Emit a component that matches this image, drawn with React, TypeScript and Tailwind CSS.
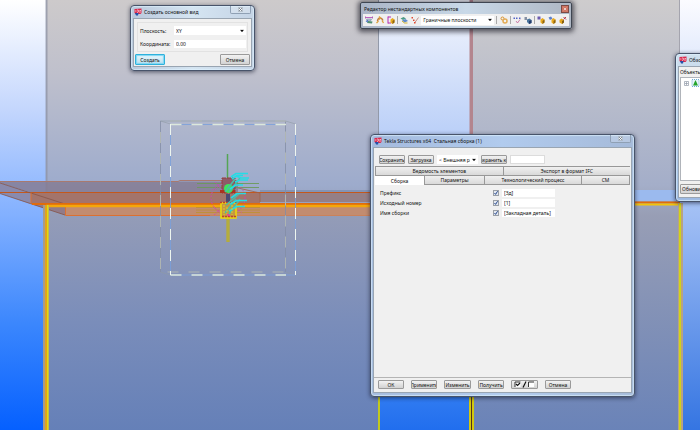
import React, { useState } from 'react';
import clsx from 'clsx';

const Logo: React.FC = () => (
  <svg viewBox="0 0 16 16" className="w-2 h-2 shrink-0" aria-hidden="true">
    <path d="M1 2 L15 1 L15 10 L13 12 L3 12 L1 10 Z" fill="#d92a4e" />
    <path d="M2 10 H9 L8 15 H4 Z" fill="#2450a8" />
    <path d="M2 6 H5 M6 4 Q9 3 9 6 T6 9 M11 5 H14 M10 8 H14" stroke="#ffd9e0" strokeWidth="1.5" fill="none" />
  </svg>
);

const CloseButton: React.FC<{ red?: boolean }> = ({ red }) => (
  <button
    type="button"
    aria-label="Закрыть"
    className={clsx(
      'flex items-center justify-center border',
      red
        ? 'w-2 h-2 border-[#7d4a44] bg-[#cf7563]'
        : 'w-[21px] h-2 self-start border-t-0 border-[#8fa0b4] rounded-b-[2px] bg-white/20'
    )}
  >
    <svg viewBox="0 0 10 10" className={red ? 'w-1 h-1' : 'w-[5px] h-[5px]'}>
      {!red && <path d="M0.8 1 H9.2 V9 H0.8 Z" fill="#f4f7fa" stroke="#8b96a2" />}
      <path d="M2 2 L8 8 M8 2 L2 8" stroke={red ? '#fff' : '#68727e'} strokeWidth="1.6" />
    </svg>
  </button>
);

interface WindowProps {
  title: string;
  className: string;
  children: React.ReactNode;
}

const Window: React.FC<WindowProps> = ({ title, className, children }) => (
  <section
    className={clsx(
      'absolute flex flex-col rounded-[4px] border border-[#48546a] px-[2px] pb-[3px] shadow-[0_1px_4px_rgba(20,25,45,0.65),inset_0_0_1px_1px_rgba(225,242,255,0.65)]',
      className
    )}
  >
    <header className="flex h-3 shrink-0 items-center gap-[2px] pl-px pr-px">
      <Logo />
      <h2 className="flex-1 whitespace-pre text-[5px] leading-[8px]">{title}</h2>
      <CloseButton />
    </header>
    {children}
  </section>
);

const Button: React.FC<{ className?: string; primary?: boolean; children: React.ReactNode }> = ({
  className,
  primary,
  children,
}) => (
  <button
    type="button"
    className={clsx(
      'flex shrink-0 items-center justify-center overflow-hidden whitespace-nowrap rounded-[1px] border bg-gradient-to-b text-[5px] leading-[8px]',
      primary
        ? 'border-[#2fb1dc] from-[#eaf7fc] to-[#b8dff0] shadow-[inset_0_0_1px_1px_#7fd6f2]'
        : 'border-[#9a9a9a] from-[#f2f2f2] to-[#d2d2d2]',
      className
    )}
  >
    {children}
  </button>
);

const Select: React.FC<{ label: string; options: string[]; className?: string }> = ({
  label,
  options,
  className,
}) => (
  <div className={clsx('relative bg-white', className)}>
    <select
      aria-label={label}
      className="block h-full w-full appearance-none bg-transparent pl-[2px] pr-2 text-[5px] leading-[8px] outline-none"
    >
      {options.map((option) => (
        <option key={option}>{option}</option>
      ))}
    </select>
    <svg viewBox="0 0 8 5" className="pointer-events-none absolute right-[2px] top-1/2 h-[3px] w-1 -translate-y-1/2">
      <path d="M0 0 H8 L4 5 Z" fill="#111" />
    </svg>
  </div>
);

const Scene: React.FC = () => (
  <svg
    viewBox="0 0 700 430"
    preserveAspectRatio="xMidYMid slice"
    className="absolute inset-0 h-full w-full"
    aria-hidden="true"
  >
    <defs>
      <linearGradient id="sky" x1="0" y1="0" x2="0" y2="1">
        <stop offset="0" stopColor="#ffffff" />
        <stop offset="0.25" stopColor="#c5d7fd" />
        <stop offset="0.5" stopColor="#82b0ff" />
        <stop offset="0.75" stopColor="#3c87fd" />
        <stop offset="1" stopColor="#0560ff" />
      </linearGradient>
      <linearGradient id="wall" x1="0" y1="0" x2="0" y2="1">
        <stop offset="0" stopColor="#cdcacb" />
        <stop offset="0.17" stopColor="#bfc0cc" />
        <stop offset="0.43" stopColor="#9dabcc" />
        <stop offset="0.5" stopColor="#949cb7" />
        <stop offset="0.75" stopColor="#7a8dba" />
        <stop offset="1" stopColor="#6580b8" />
      </linearGradient>
      <linearGradient id="rightWall" x1="0" y1="0" x2="0" y2="1">
        <stop offset="0" stopColor="#cecccd" />
        <stop offset="0.43" stopColor="#a4aec9" />
        <stop offset="0.5" stopColor="#989eb5" />
        <stop offset="1" stopColor="#6a83b8" />
      </linearGradient>
      <linearGradient id="gap" x1="0" y1="0" x2="0" y2="1">
        <stop offset="0" stopColor="#f4f6fd" />
        <stop offset="0.31" stopColor="#bbd0f8" />
        <stop offset="0.9" stopColor="#357ff2" />
        <stop offset="1" stopColor="#216eee" />
      </linearGradient>
      <linearGradient id="edge" x1="0" y1="0" x2="0" y2="1">
        <stop offset="0" stopColor="#fbfbff" />
        <stop offset="0.5" stopColor="#a0bef4" />
        <stop offset="1" stopColor="#3575e2" />
      </linearGradient>
    </defs>

    <rect width="700" height="430" fill="url(#sky)" />
    <rect x="46" width="333" height="430" fill="url(#wall)" />
    <rect x="379" width="91" height="430" fill="url(#gap)" />
    <rect x="472" width="208" height="430" fill="url(#rightWall)" />
    <rect x="680" width="20" height="430" fill="url(#edge)" />
    <rect x="45.500" width="2" height="192" fill="#8d93a5" opacity="0.75" />
    <rect x="378" width="1" height="200" fill="#9299a9" />
    <rect x="469.500" width="3.500" height="200" fill="#b3858e" />
    <rect x="679" width="1" height="200" fill="#a4a4ae" />

    {/* far edge of the slab, right of the beam */}
    <rect x="260" y="190" width="112" height="2" fill="#8494b5" />
    <rect x="635" y="190" width="45" height="11" fill="#9bbaee" />

    {/* beam */}
    <path d="M0 181.500 H238 V192.500 H31 L0 183 Z" fill="#857b93" opacity="0.85" />
    <path d="M0 183 L31 192.500 V204 L0 193.500 Z" fill="#8885a4" opacity="0.9" />
    <path d="M31 192.500 H260 V204 H31 Z" fill="#a3746b" />
    <path d="M260 192.500 H372 V202 H260 Z" fill="#957f86" />
    <path d="M31 204 H65 V215 Z" fill="#927b88" />
    <path d="M65 206 H372 V215 H65 Z" fill="#c28c70" />
    <path d="M0 181.500 H178 L180 180.500 H238" fill="none" stroke="#a9796e" />
    <path d="M0 192.500 H372" stroke="#c4581c" strokeWidth="1.200" />
    <path d="M0 183 L65 204 M0 193.500 L65 215" stroke="#875448" strokeWidth="0.800" />
    <path d="M31 192.500 V204 M65.500 204 V215.500 H210" fill="none" stroke="#dc7030" />
    <path d="M210 215.500 H372" stroke="#d97b42" strokeWidth="0.800" />
    <path d="M238 188 L260 193 V202" fill="none" stroke="#a06048" strokeWidth="0.800" />

    {/* slab outline */}
    <path d="M32 204 H372 M635 202.500 H680" stroke="#e16c0c" strokeWidth="2" />
    <path d="M46 206 H372" stroke="#f3a70b" strokeWidth="2.500" />
    <path d="M635 204.500 H680" stroke="#f3c40a" strokeWidth="2" />
    <rect x="43" y="205" width="6" height="225" fill="#a99c85" />
    <rect x="45" y="205" width="2" height="225" fill="#e2a21e" />
    <rect x="47" y="205" width="1.500" height="225" fill="#e1dc0a" />
    <rect x="378" y="396" width="2" height="34" fill="#c3c91c" />
    <rect x="469" y="396" width="5" height="34" fill="#d3c80f" />
    <rect x="471" y="396" width="1" height="34" fill="#50301f" />
    <rect x="678" y="203" width="5" height="227" fill="#b9a283" />
    <rect x="679" y="203" width="2" height="227" fill="#d0d31a" />

    {/* clip box of the component */}
    <g fill="none">
      <path d="M160.500 121 V272 M285.500 121 V272" stroke="#838da5" strokeWidth="0.800" />
      <path d="M160.500 121 H285.500 L295.500 124 M160.500 121 L170.500 124 M160.500 272 L170.500 275 M285.500 272 L295.500 275" stroke="#8f9aa4" strokeWidth="0.600" />
      <path d="M160.500 132 V272 H285.500 M170 121 H285.500 V272" stroke="#b3b9b3" strokeWidth="0.900" strokeDasharray="11 10" />
      <path d="M170.500 124.500 H285 M170.500 124.500 V275 M295.500 124.500 V275 M170.500 275 H295.500" stroke="#79a0dc" strokeWidth="0.800" />
      <path d="M170.500 124.500 H286 M170.500 275 H286" stroke="#dce8dc" strokeWidth="1.500" strokeDasharray="11 10" />
      <path d="M170.500 124 V275 M295.500 124 V275" stroke="#edf5ef" strokeDasharray="11 10" />
    </g>

    {/* anchors and bolts */}
    <g fill="none">
      <path d="M227.500 154 V180" stroke="#54a554" strokeWidth="1.500" />
      <path d="M197 183.500 H259 M197 187.500 H259" stroke="#6b9a59" strokeWidth="0.900" />
      <path d="M196 207.500 H260 M196 210 H260 M196 212.500 H260" stroke="#bd9137" strokeWidth="0.900" />
      <path d="M228 216 V242" stroke="#aaa562" strokeWidth="4" />
      <path d="M228 216 V242" stroke="#b4ad3d" strokeWidth="2" />
      <ellipse cx="228" cy="198" rx="17" ry="16" stroke="#d33fb8" strokeDasharray="1.500 2" />
      <path d="M215 182 L222 190 M215 190 L222 183 M214 207 L222 215 M214 215 L222 208 M236 207 L242 213" stroke="#d33fb8" strokeDasharray="1 1.300" />
      <rect x="222" y="178" width="13" height="15" fill="#8e5a68" stroke="#963b3b" strokeDasharray="4 1" />
      <rect x="220" y="190" width="15" height="3" fill="#aa3320" />
      <rect x="226" y="194" width="4" height="9" fill="#494a73" />
      <rect x="221" y="203" width="15" height="15" fill="#c69642" stroke="#eedb08" strokeWidth="1.500" />
      <path d="M220 202.500 H237 M222 216.500 H236" stroke="#bd442f" strokeWidth="1.300" strokeDasharray="2 1" />
      <circle cx="228.500" cy="188.500" r="4.500" fill="#3de45e" />
      <path d="M225 192 L235 179 M229 192 L240 178 M225 213 L236 199 M229 214 L240 199 M226 205 L239 194" stroke="#4bbda6" strokeWidth="1.600" />
      <path d="M231 177 L236 173.500 H248 M232 179 L237 175.500 H243 M235 182 L240 180 H248 M236 176 L241 178 H249 M230 189 L236 185 H243 M231 198 L237 193.500 H246 M230 204 L237 200.500 H247 M229 211 L237 206.500 H245" stroke="#24dce5" strokeWidth="1.700" />
      <path d="M224 205 V215 M227 207 V216 M232 205 V215" stroke="#d7d427" strokeDasharray="2 1" />
      <path d="M227 214 L230 216" stroke="#e92fae" strokeWidth="1.500" />
    </g>
  </svg>
);

const Cube = () => (
  <>
    <path d="M7 7 L11 4 L15 7 V13 L11 16 L7 13 Z" fill="#e9aa1e" />
    <path d="M11 10 L15 7 V13 L11 16 Z" fill="#8d6410" />
  </>
);

const toolGroups = [
  [
    {
      name: 'Добавить плоскость',
      art: (
        <>
          <path d="M2 3 H14" stroke="#b33cb4" strokeWidth="1.6" />
          <path d="M1 1 V5 M15 1 V5" stroke="#9545a4" strokeWidth="1.6" />
          <path d="M3 6 H13 L11 10 H5 Z" fill="#b9c9d8" stroke="#5d7396" />
          <path d="M6 10 L15 11 L14 15 L4 14 Z" fill="#4f8f72" />
          <path d="M1 10 L6 8 L5 13 Z" fill="#4068c4" />
        </>
      ),
    },
    {
      name: 'Фиксированный размер',
      art: (
        <>
          <path d="M3 10 Q4 4 8 4 T14 9" fill="none" stroke="#c07a3f" strokeWidth="3" />
          <path d="M6 1 L9 4 L6 7 M1 14 L5 10 M12 9 L15 14" fill="none" stroke="#dda23b" strokeWidth="2.5" />
        </>
      ),
    },
    {
      name: 'Привязка',
      art: (
        <>
          <path d="M2 1 V15 M2 2 H8 M2 14 H8" fill="none" stroke="#b22db1" strokeWidth="2" />
          <Cube />
        </>
      ),
    },
  ],
  [
    {
      name: 'Плоскости',
      art: (
        <>
          <path d="M1 5 L7 2 L12 5 L6 8 Z" fill="#4c9b87" />
          <path d="M4 9 L11 6 L16 10 L9 13 Z" fill="#608ccc" />
          <path d="M4 10 L9 14 H15" fill="none" stroke="#d3b32d" strokeWidth="2" />
        </>
      ),
    },
    {
      name: 'Точки и линии',
      art: (
        <>
          <path d="M7 14 L15 3" stroke="#b56a62" strokeWidth="1.5" />
          <path d="M1 2 H4 V5 H1 Z M4 7 H7 V10 H4 Z M6 12 H9 V15 H6 Z" fill="#e04832" />
        </>
      ),
    },
  ],
  [
    {
      name: 'Переменные',
      art: (
        <>
          <circle cx="5" cy="5" r="3" fill="none" stroke="#d9932c" strokeWidth="2" />
          <circle cx="10" cy="10" r="4" fill="none" stroke="#e2ab55" strokeWidth="3" />
        </>
      ),
    },
  ],
  [
    {
      name: 'Показать точки',
      art: (
        <>
          <path d="M1 3 H4 V6 H1 Z M6 3 H9 V6 H6 Z M12 3 H15 V6 H12 Z" fill="#5264c5" />
          <path d="M6 10 L9 14 L14 7" fill="none" stroke="#c15b91" strokeWidth="1.5" />
        </>
      ),
    },
    {
      name: 'Показать объекты',
      art: (
        <>
          <path d="M1 2 H6 V8 H1 Z" fill="#8590a4" />
          <path d="M6 7 L11 5 L15 8 V14 L10 16 L6 12 Z" fill="#49759d" />
          <path d="M10 10 L15 8 V14 L10 16 Z" fill="#243c6c" />
        </>
      ),
    },
  ],
  [
    { name: 'Сохранить компонент', art: <><path d="M1 1 H7 V7 H1 Z" fill="#6b5bb0" /><Cube /></> },
    { name: 'Сохранить как', art: <><path d="M1 3 L6 1 L9 5 L4 8 Z" fill="#5c7fca" /><Cube /></> },
    {
      name: 'Закрыть редактор',
      art: (
        <>
          <path d="M1 8 L5 5 L10 8 V13 L6 16 L1 13 Z" fill="#e2a51d" />
          <path d="M6 10 L10 8 V13 L6 16 Z" fill="#815d12" />
          <path d="M9 2 L14 7 M14 2 L9 7" stroke="#b63e50" strokeWidth="2" />
        </>
      ),
    },
  ],
];

const ToolGroup: React.FC<{ tools: { name: string; art: React.ReactNode }[] }> = ({ tools }) => (
  <div className="flex gap-[3px]">
    {tools.map((tool) => (
      <button key={tool.name} type="button" aria-label={tool.name} className="h-2 w-2">
        <svg viewBox="0 0 16 16" className="h-2 w-2">
          {tool.art}
        </svg>
      </button>
    ))}
  </div>
);

const Separator = () => <div className="h-2 w-px bg-[#a9a9a9]" />;

const ComponentToolbar: React.FC = () => (
  <section className="absolute left-[360px] top-[2px] w-[212px] rounded-[2px] border border-[#3f4652] bg-gradient-to-r from-[#a9b4c6] via-[#c9d9e8] to-[#aeb7c4] px-[2px] pb-[2px] shadow-[0_1px_5px_2px_rgba(25,25,35,0.65)]">
    <header className="flex h-[11px] items-center justify-between pl-px">
      <h2 className="text-[5px] leading-[8px]">Редактор нестандартных компонентов</h2>
      <CloseButton red />
    </header>
    <div className="flex h-3 items-center justify-between bg-[#f0f0f0] px-[2px]">
      <ToolGroup tools={toolGroups[0]} />
      <Separator />
      <ToolGroup tools={toolGroups[1]} />
      <Select
        label="Тип плоскости"
        options={['Граничные плоскости', 'Плоскости компонента']}
        className="h-[9px] w-[73px]"
      />
      <Separator />
      <ToolGroup tools={toolGroups[2]} />
      <Separator />
      <ToolGroup tools={toolGroups[3]} />
      <Separator />
      <ToolGroup tools={toolGroups[4]} />
    </div>
  </section>
);

const CreateViewDialog: React.FC = () => (
  <Window
    title="Создать основной вид"
    className="left-[130px] top-[5px] w-[125px] bg-gradient-to-r from-[#b9c8dc] via-[#d5e5f2] to-[#c4d3e5]"
  >
    <div className="border border-[#99a5b2] bg-[#f0f0f0] p-px">
      <div className="m-[2px] grid grid-cols-[34px_1fr] items-center gap-y-[5px] border border-[#e2e2e2] px-px py-[3px] pl-[2px] text-[5px] leading-[8px]">
        <label htmlFor="plane">Плоскость:</label>
        <Select label="Плоскость" options={['XY', 'XZ', 'ZY']} className="h-[9px]" />
        <label htmlFor="coordinate">Координата:</label>
        <input id="coordinate" defaultValue="0.00" className="h-2 min-w-0 bg-white pl-[2px] outline-none" />
      </div>
      <div className="mt-[2px] flex justify-between">
        <Button primary className="h-[11px] w-[30px]">Создать</Button>
        <Button className="h-[11px] w-[30px]">Отмена</Button>
      </div>
    </div>
  </Window>
);

const fields = [
  { id: 'prefix', label: 'Префикс', value: '[Зд]' },
  { id: 'number', label: 'Исходный номер', value: '[1]' },
  { id: 'name', label: 'Имя сборки', value: '[Закладная деталь]' },
];

const lowerTabs = [
  { label: 'Сборка', width: 'w-[50px]' },
  { label: 'Параметры', width: 'w-[60px]' },
  { label: 'Технологический процесс', width: 'w-[97px]' },
  { label: 'CM', width: 'flex-1' },
];

const AssemblyDialog: React.FC = () => {
  const [tab, setTab] = useState('Сборка');

  return (
    <Window
      title="Tekla Structures x64  Стальная сборка (1)"
      className="left-[370px] top-[134px] w-[265px] bg-gradient-to-r from-[#a4badd] via-[#b1cbee] to-[#a5bad9]"
    >
      <div className="border border-[#99a5b2] bg-[#f0f0f0]">
        <div className="flex items-center pl-[5px] pt-[7px]">
          <Button className="h-[9px] w-[26px]">Сохранить</Button>
          <Button className="ml-[3px] h-[9px] w-[26px]">Загрузка</Button>
          <Select label="Файл" options={['< Внешняя работа >']} className="ml-[3px] h-[9px] w-[41px]" />
          <Button className="ml-[3px] h-[9px] w-[26px]">Сохранить как</Button>
          <input
            aria-label="Имя файла"
            className="ml-[3px] h-[9px] w-[35px] border border-[#dcdcdc] bg-white outline-none"
          />
        </div>

        <div className="mx-px mt-[2px] text-[5px] leading-[8px]" role="tablist">
          <div className="flex">
            {['Ведомость элементов', 'Экспорт в формат IFC'].map((label) => (
              <button
                key={label}
                type="button"
                role="tab"
                aria-selected={tab === label}
                onClick={() => setTab(label)}
                className="h-[9px] flex-1 border-l border-t border-[#989898] bg-gradient-to-b from-[#f0f0f0] to-[#d9d9d9]"
              >
                {label}
              </button>
            ))}
          </div>
          <div className="flex">
            {lowerTabs.map(({ label, width }) => (
              <button
                key={label}
                type="button"
                role="tab"
                aria-selected={tab === label}
                onClick={() => setTab(label)}
                className={clsx(
                  'h-[10px] border-t border-r border-[#989898]',
                  width,
                  tab === label ? 'bg-white' : 'border-b bg-gradient-to-b from-[#f0f0f0] to-[#d9d9d9]'
                )}
              >
                {label}
              </button>
            ))}
          </div>
        </div>

        <div className="flex h-[193px] flex-col gap-[2px] border-b border-[#b4b4b4] pl-[6px] pt-1">
          {fields.map((field) => (
            <div key={field.id} className="flex items-center text-[5px] leading-[8px]">
              <label htmlFor={field.id} className="w-[113px]">{field.label}</label>
              <span className="relative mr-[3px] h-[6px] w-[6px]">
                <input
                  type="checkbox"
                  defaultChecked
                  aria-label={field.label}
                  className="peer block h-[6px] w-[6px] appearance-none border border-[#9a9fa6] bg-[#e3e8f0]"
                />
                <svg viewBox="0 0 6 6" className="pointer-events-none absolute inset-0 hidden peer-checked:block">
                  <path d="M1.5 3 L2.6 4.4 L4.6 1.2" fill="none" stroke="#2b4a8c" strokeWidth="1" />
                </svg>
              </span>
              <input id={field.id} defaultValue={field.value} className="h-2 w-[53px] bg-white pl-[2px] outline-none" />
            </div>
          ))}
        </div>

        <div className="flex gap-[7px] px-1 pb-[3px] pt-[2px]">
          <Button className="h-[9px] w-[26px]">ОК</Button>
          <Button className="h-[9px] w-[26px]">Применить</Button>
          <Button className="h-[9px] w-[27px]">Изменить</Button>
          <Button className="h-[9px] w-[26px]">Получить</Button>
          <Button className="h-[9px] w-[27px]">
            <svg viewBox="0 0 42 14" className="h-[7px] w-[21px]" role="img" aria-label="Включить или отключить все">
              <path d="M2 2 H13 V12 H2 Z M29 2 H40 V12 H29 Z" fill="#fff" />
              <path d="M2 12 V2 H13 M29 12 V2 H40" fill="none" stroke="#333" strokeWidth="2" />
              <path d="M4 6 L7 9 L12 4 M18 13 L24 1" fill="none" stroke="#111" strokeWidth="2.400" />
            </svg>
          </Button>
          <Button className="h-[9px] w-[26px]">Отмена</Button>
        </div>
      </div>
    </Window>
  );
};

const BrowserWindow: React.FC = () => (
  <Window
    title="Обзор"
    className="left-[675px] top-[53px] w-[80px] bg-gradient-to-b from-[#cfe0ee] to-[#9cb9e3]"
  >
    <div className="border border-[#99a5b2] bg-[#f0f0f0] pl-px text-[5px] leading-[8px]">
      <h3 className="py-px">Объекты</h3>
      <div className="h-[104px] border border-[#b0b4ba] bg-white pl-[3px] pt-px">
        <svg viewBox="0 0 16 8" className="h-2 w-4" role="img" aria-label="Модель">
          <path d="M0.5 2.5 H4.500 V6.500 H0.500 Z M1 4.500 H4 M2.500 3 V6" fill="none" stroke="#909aa8" strokeWidth="0.700" />
          <path d="M8 0.500 H15 V7.500 H8 Z" fill="#e9f4fb" stroke="#4b9ac8" strokeWidth="0.800" strokeDasharray="1 1" />
          <path d="M11.500 1 L14 6.500 H9 Z" fill="#24a52c" />
        </svg>
      </div>
      <Button className="my-[3px] h-[10px] w-[28px]">Обновить</Button>
    </div>
  </Window>
);

const App: React.FC = () => (
  <main className="relative min-h-screen overflow-hidden bg-[#8293b8] font-['Noto_Sans','Open_Sans',sans-serif] text-[#111]">
    <Scene />
    <CreateViewDialog />
    <ComponentToolbar />
    <BrowserWindow />
    <AssemblyDialog />
  </main>
);

export default App;
